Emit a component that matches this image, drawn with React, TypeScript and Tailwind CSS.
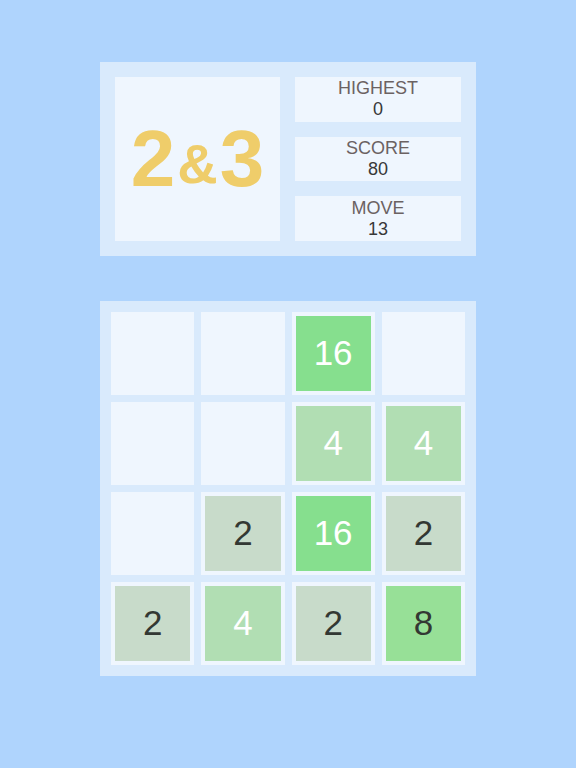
import React from 'react';

type Tile = number | null;

const board: Tile[][] = [
  [null, null, 16, null],
  [null, null, 4, 4],
  [null, 2, 16, 2],
  [2, 4, 2, 8],
];

const tileStyle: Record<number, string> = {
  2: 'bg-[#c8dbca] text-[#333833]',
  4: 'bg-[#b1deb3] text-white',
  8: 'bg-[#97e097] text-[#333833]',
  16: 'bg-[#86df8e] text-white',
};

const Stat: React.FC<{ label: string; value: number }> = ({ label, value }) => (
  <div className="flex-1 bg-[#eff6fe] flex flex-col items-center justify-center leading-[21px] text-[18px]">
    <span className="text-[#6b6262]">{label}</span>
    <span className="text-[#383838]">{value}</span>
  </div>
);

const Cell: React.FC<{ value: Tile }> = ({ value }) => (
  <div className="h-[83px] bg-[#eff6fe] p-[4px]">
    {value !== null && (
      <div className={`h-full w-full flex items-center justify-center text-[35px] ${tileStyle[value]}`}>
        {value}
      </div>
    )}
  </div>
);

const App: React.FC = () => {
  return (
    <div
      className="min-h-[768px] w-full bg-[#afd4fd] flex flex-col items-center pt-[62px] gap-[45px]"
      style={{ fontFamily: '"Liberation Sans", Arial, sans-serif' }}
    >
      <div className="w-[376px] h-[194px] bg-[#d9eafc] p-[15px] flex gap-[15px]">
        <div className="w-[165px] bg-[#eff6fe] flex items-center justify-center font-bold text-[#efcd6a]">
          <span className="text-[80px] leading-none">2</span>
          <span className="text-[56px] leading-none mt-[10px] mx-[2px]">&amp;</span>
          <span className="text-[80px] leading-none">3</span>
        </div>
        <div className="flex-1 flex flex-col gap-[15px]">
          <Stat label="HIGHEST" value={0} />
          <Stat label="SCORE" value={80} />
          <Stat label="MOVE" value={13} />
        </div>
      </div>

      <div className="w-[376px] bg-[#d9eafc] p-[11px] grid grid-cols-4 gap-[7px]">
        {board.flat().map((v, i) => (
          <Cell key={i} value={v} />
        ))}
      </div>
    </div>
  );
};

export default App;
